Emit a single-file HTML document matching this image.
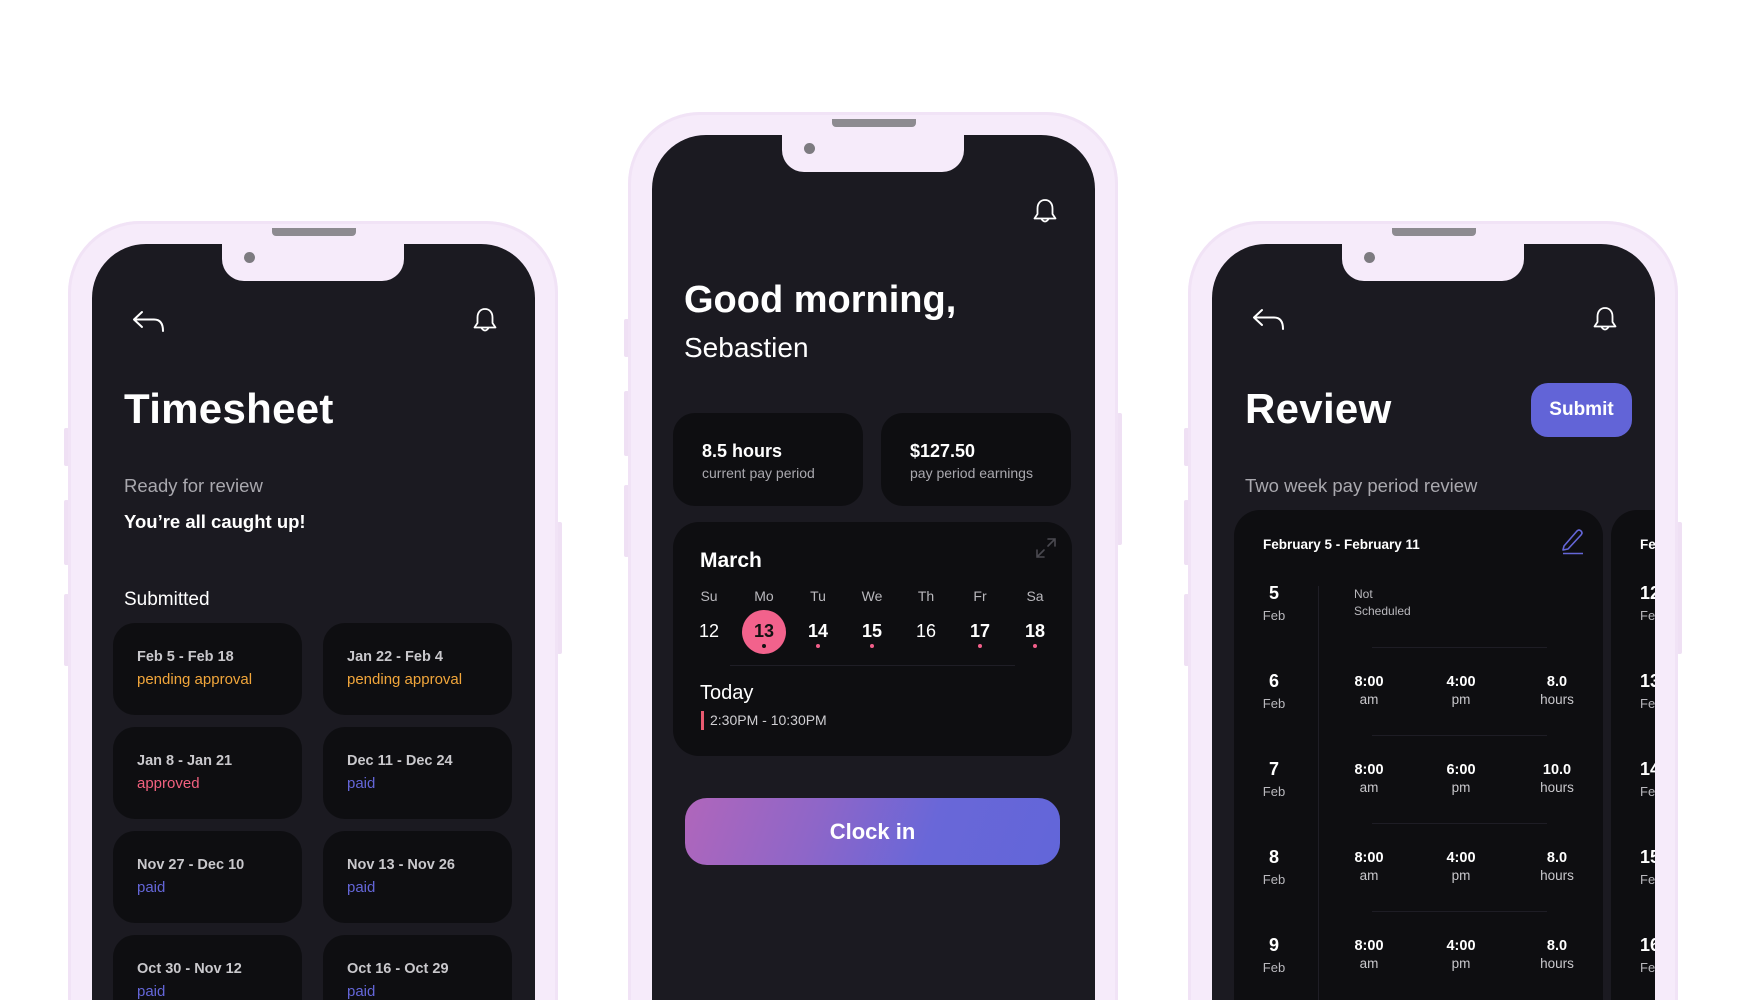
<!DOCTYPE html>
<html style="overflow:hidden;width:1742px;height:1000px"><head><meta charset="utf-8"><style>
*{margin:0;padding:0;box-sizing:border-box}
html,body{overflow:hidden}
body{width:1742px;height:1000px;background:#fff;position:relative;font-family:"Liberation Sans",sans-serif;color:#fff}
#wrap{position:absolute;left:0;top:0;width:1742px;height:1000px;overflow:hidden}
.frame{position:absolute;width:490px;height:1100px;background:#f6ebfa;border-radius:72px;box-shadow:inset 0 0 0 3px #f1e3f6}
.btn{position:absolute;width:5px;background:#efe0f4;border-radius:2px}
.screen{position:absolute;left:24px;top:23px;width:443px;height:1100px;background:#1b1a21;border-radius:54px;overflow:hidden}
.notch{position:absolute;left:130px;top:-2px;width:182px;height:39px;background:#f6ebfa;border-radius:0 0 22px 22px}
.spk{position:absolute;left:204px;top:7px;width:84px;height:8px;background:#8d8b90;border-radius:0 0 4px 4px}
.cam{position:absolute;width:11px;height:11px;border-radius:50%;background:#7d7b80}
.a{position:absolute;white-space:nowrap}
.card{position:absolute;background:#0e0e11;border-radius:22px}
.dt{position:absolute;left:24px;top:26px;font-size:14.5px;font-weight:700;color:#c9c8cc}
.st{position:absolute;left:24px;top:48px;font-size:15px}
.wd{position:absolute;width:40px;margin-left:-20px;text-align:center;font-size:14px;color:#b9b8bd}
.dn{position:absolute;width:40px;margin-left:-20px;text-align:center;font-size:18px}
.dot{position:absolute;width:4px;height:4px;border-radius:50%;background:#f25f8a;margin-left:-2px}
.rn{position:absolute;width:40px;margin-left:-20px;text-align:center;font-size:18px;font-weight:700}
.rl{position:absolute;width:40px;margin-left:-20px;text-align:center;font-size:13px;color:#b9b8bd}
.t{position:absolute;width:70px;margin-left:-35px;text-align:center;font-size:14.5px;font-weight:700;line-height:18px}
.t span{display:block;font-weight:400;color:#c9c8cc;font-size:13.5px}
.hd{position:absolute;height:1px;background:#1e1d25;left:138px;width:175px}
</style></head><body><div id="wrap">

<!-- LEFT PHONE -->
<div class="btn" style="left:64px;top:428px;height:38px"></div>
<div class="btn" style="left:64px;top:500px;height:65px"></div>
<div class="btn" style="left:64px;top:594px;height:72px"></div>
<div class="btn" style="left:557px;top:522px;height:132px"></div>
<div class="frame" style="left:68px;top:221px">
 <div class="spk"></div>
 <div class="screen">
  <div class="notch"></div>
  <div class="cam" style="left:152px;top:8px"></div>
  <svg class="a" style="left:40px;top:66px" width="34" height="24" viewBox="0 0 34 24" fill="none" stroke="#fff" stroke-width="2" stroke-linecap="round" stroke-linejoin="round"><path d="M10 2 L2 9.5 L10 17 M2 9.5 H22 Q31 9.5 31 21"/></svg>
  <svg class="a" style="left:380px;top:63px" width="26" height="28" viewBox="0 0 26 28" fill="none" stroke="#fff" stroke-width="1.8" stroke-linejoin="round"><path d="M13 2 C8 2 5.5 6 5.5 10.5 V16 L2.5 20.5 H23.5 L20.5 16 V10.5 C20.5 6 18 2 13 2 Z M9.5 21 Q13 26 16.5 21"/></svg>
  <div class="a" style="left:32px;top:139px;font-size:42px;font-weight:700;line-height:52px;letter-spacing:0.3px">Timesheet</div>
  <div class="a" style="left:32px;top:230px;font-size:18.5px;line-height:24px;color:#a9a8ae">Ready for review</div>
  <div class="a" style="left:32px;top:266px;font-size:18.5px;line-height:24px;font-weight:700">You’re all caught up!</div>
  <div class="a" style="left:32px;top:344px;font-size:19px;line-height:24px">Submitted</div>
  <div class="card" style="left:21px;top:379px;width:189px;height:92px"><div class="dt">Feb 5 - Feb 18</div><div class="st" style="color:#f1a63b">pending approval</div></div>
  <div class="card" style="left:231px;top:379px;width:189px;height:92px"><div class="dt">Jan 22 - Feb 4</div><div class="st" style="color:#f1a63b">pending approval</div></div>
  <div class="card" style="left:21px;top:483px;width:189px;height:92px"><div class="dt">Jan 8 - Jan 21</div><div class="st" style="color:#f2617f">approved</div></div>
  <div class="card" style="left:231px;top:483px;width:189px;height:92px"><div class="dt">Dec 11 - Dec 24</div><div class="st" style="color:#6466d8">paid</div></div>
  <div class="card" style="left:21px;top:587px;width:189px;height:92px"><div class="dt">Nov 27 - Dec 10</div><div class="st" style="color:#6466d8">paid</div></div>
  <div class="card" style="left:231px;top:587px;width:189px;height:92px"><div class="dt">Nov 13 - Nov 26</div><div class="st" style="color:#6466d8">paid</div></div>
  <div class="card" style="left:21px;top:691px;width:189px;height:92px"><div class="dt">Oct 30 - Nov 12</div><div class="st" style="color:#6466d8">paid</div></div>
  <div class="card" style="left:231px;top:691px;width:189px;height:92px"><div class="dt">Oct 16 - Oct 29</div><div class="st" style="color:#6466d8">paid</div></div>
 </div>
</div>

<!-- CENTER PHONE -->
<div class="btn" style="left:624px;top:319px;height:38px"></div>
<div class="btn" style="left:624px;top:391px;height:65px"></div>
<div class="btn" style="left:624px;top:485px;height:72px"></div>
<div class="btn" style="left:1117px;top:413px;height:132px"></div>
<div class="frame" style="left:628px;top:112px">
 <div class="spk"></div>
 <div class="screen">
  <div class="notch"></div>
  <div class="cam" style="left:152px;top:8px"></div>
  <svg class="a" style="left:380px;top:63px" width="26" height="28" viewBox="0 0 26 28" fill="none" stroke="#fff" stroke-width="1.8" stroke-linejoin="round"><path d="M13 2 C8 2 5.5 6 5.5 10.5 V16 L2.5 20.5 H23.5 L20.5 16 V10.5 C20.5 6 18 2 13 2 Z M9.5 21 Q13 26 16.5 21"/></svg>
  <div class="a" style="left:32px;top:141px;font-size:38px;font-weight:700;line-height:48px">Good morning,</div>
  <div class="a" style="left:32px;top:196px;font-size:28px;line-height:34px">Sebastien</div>
  <div class="card" style="left:21px;top:278px;width:190px;height:93px"></div>
  <div class="a" style="left:50px;top:305px;font-size:18px;font-weight:700;line-height:22px">8.5 hours</div>
  <div class="a" style="left:50px;top:329px;font-size:14px;line-height:18px;color:#a9a8ae">current pay period</div>
  <div class="card" style="left:229px;top:278px;width:190px;height:93px"></div>
  <div class="a" style="left:258px;top:305px;font-size:18px;font-weight:700;line-height:22px">$127.50</div>
  <div class="a" style="left:258px;top:329px;font-size:14px;line-height:18px;color:#a9a8ae">pay period earnings</div>
  <div class="card" style="left:21px;top:387px;width:399px;height:234px;border-radius:26px">
   <div class="a" style="left:27px;top:26px;font-size:21px;font-weight:700;line-height:26px">March</div>
   <svg class="a" style="left:362px;top:15px" width="22" height="22" viewBox="0 0 22 22" fill="none" stroke="#4a4950" stroke-width="1.6" stroke-linecap="round"><path d="M13 2 H20 V9 M20 2 L13 9 M2 13 V20 H9 M2 20 L9 13"/></svg>
   <div class="wd" style="left:36px;top:66px">Su</div><div class="wd" style="left:91px;top:66px">Mo</div><div class="wd" style="left:145px;top:66px">Tu</div><div class="wd" style="left:199px;top:66px">We</div><div class="wd" style="left:253px;top:66px">Th</div><div class="wd" style="left:307px;top:66px">Fr</div><div class="wd" style="left:362px;top:66px">Sa</div>
   <div class="a" style="left:69px;top:88px;width:44px;height:44px;border-radius:50%;background:#f2628c"></div>
   <div class="dn" style="left:36px;top:99px">12</div>
   <div class="dn" style="left:91px;top:99px;font-weight:700;color:#111">13</div>
   <div class="dn" style="left:145px;top:99px;font-weight:700">14</div>
   <div class="dn" style="left:199px;top:99px;font-weight:700">15</div>
   <div class="dn" style="left:253px;top:99px">16</div>
   <div class="dn" style="left:307px;top:99px;font-weight:700">17</div>
   <div class="dn" style="left:362px;top:99px;font-weight:700">18</div>
   <div class="dot" style="left:91px;top:122px;background:#111"></div><div class="dot" style="left:145px;top:122px"></div><div class="dot" style="left:199px;top:122px"></div><div class="dot" style="left:307px;top:122px"></div><div class="dot" style="left:362px;top:122px"></div>
   <div class="a" style="left:57px;top:143px;width:285px;height:1px;background:#1f1e26"></div>
   <div class="a" style="left:27px;top:158px;font-size:20px;line-height:26px">Today</div>
   <div class="a" style="left:28px;top:189px;width:3px;height:19px;background:#e85a70"></div>
   <div class="a" style="left:37px;top:189px;font-size:14px;line-height:19px;color:#d0cfd3">2:30PM - 10:30PM</div>
  </div>
  <div class="a" style="left:33px;top:663px;width:375px;height:67px;border-radius:22px;background:linear-gradient(110deg,#b066bb 0%,#8e66c8 35%,#6967d8 65%,#6266d9 100%);text-align:center;font-size:22px;font-weight:700;line-height:67px">Clock in</div>
 </div>
</div>

<!-- RIGHT PHONE -->
<div class="btn" style="left:1184px;top:428px;height:38px"></div>
<div class="btn" style="left:1184px;top:500px;height:65px"></div>
<div class="btn" style="left:1184px;top:594px;height:72px"></div>
<div class="btn" style="left:1677px;top:522px;height:132px"></div>
<div class="frame" style="left:1188px;top:221px">
 <div class="spk"></div>
 <div class="screen">
  <div class="notch"></div>
  <div class="cam" style="left:152px;top:8px"></div>
  <svg class="a" style="left:40px;top:64px" width="34" height="24" viewBox="0 0 34 24" fill="none" stroke="#fff" stroke-width="2" stroke-linecap="round" stroke-linejoin="round"><path d="M10 2 L2 9.5 L10 17 M2 9.5 H22 Q31 9.5 31 21"/></svg>
  <svg class="a" style="left:380px;top:62px" width="26" height="28" viewBox="0 0 26 28" fill="none" stroke="#fff" stroke-width="1.8" stroke-linejoin="round"><path d="M13 2 C8 2 5.5 6 5.5 10.5 V16 L2.5 20.5 H23.5 L20.5 16 V10.5 C20.5 6 18 2 13 2 Z M9.5 21 Q13 26 16.5 21"/></svg>
  <div class="a" style="left:33px;top:139px;font-size:42px;font-weight:700;line-height:52px;letter-spacing:0.3px">Review</div>
  <div class="a" style="left:319px;top:139px;width:101px;height:54px;border-radius:17px;background:#6264d7;text-align:center;font-size:19px;font-weight:700;line-height:54px">Submit</div>
  <div class="a" style="left:33px;top:230px;font-size:18.5px;line-height:24px;color:#a9a8ae">Two week pay period review</div>
  <div class="card" style="left:22px;top:266px;width:369px;height:800px;border-radius:26px">
   <div class="a" style="left:29px;top:26px;font-size:13.5px;font-weight:700;line-height:18px">February 5 - February 11</div>
   <svg class="a" style="left:327px;top:17px" width="24" height="28" viewBox="0 0 24 28" fill="none" stroke="#6466d8" stroke-width="1.6" stroke-linejoin="round"><path d="M3 19 L16 4 Q18 2 20 4 Q22 6 20 8 L7 22 L2 23 Z M2 26.5 H22"/></svg>
   <div class="a" style="left:84px;top:76px;width:1px;height:700px;background:#1f1e26"></div>
   <div class="rn" style="left:40px;top:73px">5</div><div class="rl" style="left:40px;top:98px">Feb</div>
   <div class="rn" style="left:40px;top:161px">6</div><div class="rl" style="left:40px;top:186px">Feb</div>
   <div class="rn" style="left:40px;top:249px">7</div><div class="rl" style="left:40px;top:274px">Feb</div>
   <div class="rn" style="left:40px;top:337px">8</div><div class="rl" style="left:40px;top:362px">Feb</div>
   <div class="rn" style="left:40px;top:425px">9</div><div class="rl" style="left:40px;top:450px">Feb</div>
   <div class="a" style="left:120px;top:76px;font-size:12px;line-height:17px;color:#b9b8bd">Not<br>Scheduled</div>
   <div class="hd" style="top:137px"></div><div class="hd" style="top:225px"></div><div class="hd" style="top:313px"></div><div class="hd" style="top:401px"></div>
   <div class="t" style="left:135px;top:163px">8:00<span>am</span></div><div class="t" style="left:227px;top:163px">4:00<span>pm</span></div><div class="t" style="left:323px;top:163px">8.0<span>hours</span></div>
   <div class="t" style="left:135px;top:251px">8:00<span>am</span></div><div class="t" style="left:227px;top:251px">6:00<span>pm</span></div><div class="t" style="left:323px;top:251px">10.0<span>hours</span></div>
   <div class="t" style="left:135px;top:339px">8:00<span>am</span></div><div class="t" style="left:227px;top:339px">4:00<span>pm</span></div><div class="t" style="left:323px;top:339px">8.0<span>hours</span></div>
   <div class="t" style="left:135px;top:427px">8:00<span>am</span></div><div class="t" style="left:227px;top:427px">4:00<span>pm</span></div><div class="t" style="left:323px;top:427px">8.0<span>hours</span></div>
  </div>
  <div class="card" style="left:399px;top:266px;width:369px;height:800px;border-radius:26px">
   <div class="a" style="left:29px;top:26px;font-size:13.5px;font-weight:700;line-height:18px">Feb</div>
   <div class="a" style="left:29px;top:73px;font-size:18px;font-weight:700">12</div><div class="a" style="left:29px;top:98px;font-size:13px;color:#b9b8bd">Feb</div>
   <div class="a" style="left:29px;top:161px;font-size:18px;font-weight:700">13</div><div class="a" style="left:29px;top:186px;font-size:13px;color:#b9b8bd">Feb</div>
   <div class="a" style="left:29px;top:249px;font-size:18px;font-weight:700">14</div><div class="a" style="left:29px;top:274px;font-size:13px;color:#b9b8bd">Feb</div>
   <div class="a" style="left:29px;top:337px;font-size:18px;font-weight:700">15</div><div class="a" style="left:29px;top:362px;font-size:13px;color:#b9b8bd">Feb</div>
   <div class="a" style="left:29px;top:425px;font-size:18px;font-weight:700">16</div><div class="a" style="left:29px;top:450px;font-size:13px;color:#b9b8bd">Feb</div>
  </div>
 </div>
</div>
</div></body></html>
